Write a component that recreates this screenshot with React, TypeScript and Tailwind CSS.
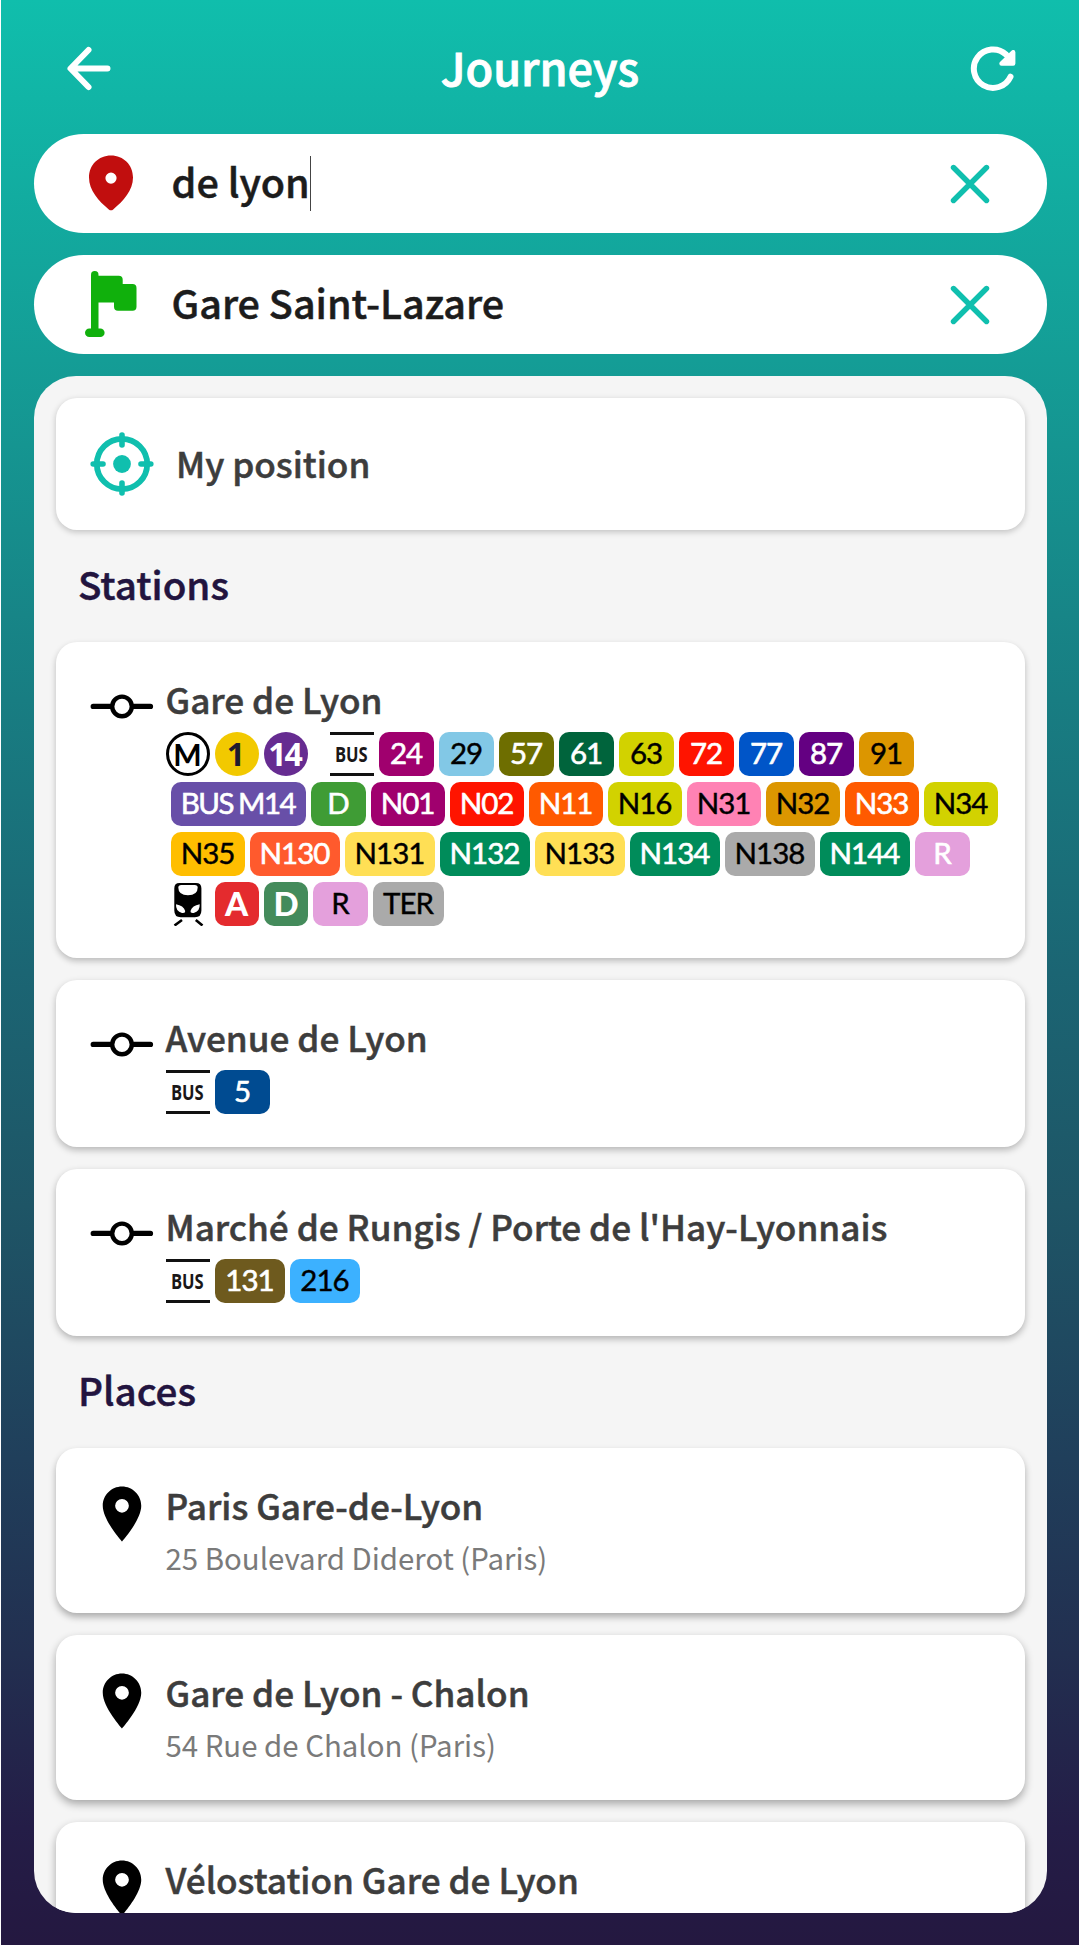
import React from "react";

type Badge = { label: string; bg: string; fg?: string; w?: string; spacing?: string };

const W2 = "w-[55px]";
const N2 = "w-[74px]";
const N3 = "w-[90px]";

const ROW_ONE: Badge[] = [
  { label: "24", bg: "bg-[#a0006e]" },
  { label: "29", bg: "bg-[#82c8e6]", fg: "text-black" },
  { label: "57", bg: "bg-[#6e6e00]" },
  { label: "61", bg: "bg-[#00643c]" },
  { label: "63", bg: "bg-[#d2d200]", fg: "text-black" },
  { label: "72", bg: "bg-[#ff1400]" },
  { label: "77", bg: "bg-[#0055c8]" },
  { label: "87", bg: "bg-[#640082]" },
  { label: "91", bg: "bg-[#dc9600]", fg: "text-black" },
];

const ROW_TWO: Badge[] = [
  { label: "BUS M14", bg: "bg-[#684fa8]", w: "w-[135px]", spacing: "tracking-[-1.5px] [word-spacing:-1px]" },
  { label: "D", bg: "bg-[#3f9c35]" },
  { label: "N01", bg: "bg-[#a0006e]", w: N2 },
  { label: "N02", bg: "bg-[#ff1400]", w: N2 },
  { label: "N11", bg: "bg-[#ff5a00]", w: N2 },
  { label: "N16", bg: "bg-[#d2d200]", fg: "text-black", w: N2 },
  { label: "N31", bg: "bg-[#ff82b4]", fg: "text-black", w: N2 },
  { label: "N32", bg: "bg-[#dc9600]", fg: "text-black", w: N2 },
  { label: "N33", bg: "bg-[#ff5a00]", w: N2 },
  { label: "N34", bg: "bg-[#d2d200]", fg: "text-black", w: N2 },
];

const ROW_THREE: Badge[] = [
  { label: "N35", bg: "bg-[#ffbe00]", fg: "text-black", w: N2 },
  { label: "N130", bg: "bg-[#ff5a2d]", w: N3 },
  { label: "N131", bg: "bg-[#ffdf55]", fg: "text-black", w: N3 },
  { label: "N132", bg: "bg-[#008c5a]", w: N3 },
  { label: "N133", bg: "bg-[#ffdf55]", fg: "text-black", w: N3 },
  { label: "N134", bg: "bg-[#008c5a]", w: N3 },
  { label: "N138", bg: "bg-[#aaaaaa]", fg: "text-black", w: N3 },
  { label: "N144", bg: "bg-[#008c5a]", w: N3 },
  { label: "R", bg: "bg-[#e4a0dc]" },
];

const ROW_FOUR: Badge[] = [
  { label: "R", bg: "bg-[#e4a0dc]", fg: "text-black" },
  { label: "TER", bg: "bg-[#aaaaaa]", fg: "text-black", w: "w-[71px]" },
];

const SANS = "font-['Noto_Sans_CJK_SC',sans-serif]";

const WHITE_TEXT = "text-white [-webkit-text-stroke:0.6px_white]";
const BLACK_TEXT = "text-black [-webkit-text-stroke:0.4px_black]";

function LineBadge({ label, bg, fg, w = W2, spacing = "tracking-[-1px]" }: Badge) {
  return (
    <span
      className={`flex h-[44px] shrink-0 items-center justify-center whitespace-nowrap rounded-[10px] pb-[2px] font-['Lato',sans-serif] text-[29.5px] leading-[42px] font-normal ${spacing} ${bg} ${fg ? BLACK_TEXT : WHITE_TEXT} ${w}`}
    >
      {label}
    </span>
  );
}

function BusMark() {
  return (
    <span className="flex h-[44px] w-[44px] shrink-0 items-center justify-center border-y-[3px] border-[#111] font-['Open_Sans',sans-serif] text-[21.5px] font-bold text-[#1a1718]">
      <span className="inline-block scale-x-[0.77]">BUS</span>
    </span>
  );
}

function TrainMark() {
  return (
    <svg className="h-[44px] w-[44px] shrink-0" viewBox="0 0 44 44">
      <path
        fill="#000"
        fillRule="evenodd"
        d="M13.500.9h16.500q5.400 0 5.400 5.400v22.200q0 6.800-6.500 6.800H14.800Q8.300 35.300 8.300 28.500V6.300q0-5.400 5.200-5.400zM15.300 2.900q-3 0-3 2.600 0 7.700 9.700 7.700t9.700-7.700q0-2.600-3-2.600zM10 22.300q-.4 7.200 6 8.700 3.600.5 3.200-1.900Q17.500 23.500 10 22.300zM33.700 22.300q.4 7.200-6 8.700-3.600.5-3.200-1.900 1.700-5.600 9.200-6.800z"
      />
      <path d="M16 38 8.500 43.500M29.800 38l6.700 5.500" stroke="#000" strokeWidth="2.600" />
    </svg>
  );
}

function CommitIcon() {
  return (
    <svg className="mt-[-2px] h-[66px] w-[66px] shrink-0" viewBox="0 0 66 66" fill="none" stroke="#000">
      <path d="M4.200 33.400H21M45 33.400h16.500" strokeWidth="5.200" strokeLinecap="round" />
      <circle cx="33" cy="33.400" r="9.800" strokeWidth="4.400" />
    </svg>
  );
}

function PinIcon() {
  return (
    <svg className="h-[66px] w-[66px] shrink-0" viewBox="0 0 24 24">
      <path d="M12 2C8.130 2 5 5.130 5 9c0 5.250 7 13 7 13s7-7.750 7-13c0-3.870-3.130-7-7-7zm0 9.500a2.500 2.500 0 0 1 0-5 2.500 2.500 0 0 1 0 5z" />
    </svg>
  );
}

function RedPin() {
  return (
    <svg className="mt-[-2px] h-[56px] w-[46px]" viewBox="0 0 46 56" fill="#c10e0e">
      <path
        fillRule="evenodd"
        d="M23 .6C10.500.6 1 10 1 22.600c0 12.600 9.600 23.600 19.800 31.800q2.200 1.700 4.400 0C35.400 46.200 45 35.200 45 22.600 45 10 35.500.6 23 .6zm0 28.100a5.600 5.600 0 1 1 0-11.200 5.600 5.600 0 0 1 0 11.200z"
      />
    </svg>
  );
}

function FlagIcon() {
  return (
    <svg className="h-[68px] w-[54px]" viewBox="0 0 54 68" fill="#10b00c">
      <rect x="7" y="0" width="7.500" height="64" rx="3.700" />
      <rect x="1" y="57.500" width="19.600" height="8.600" rx="4.300" />
      <path d="M12 4.800h22.700a4 4 0 0 1 4 4v4.300h9.800a4 4 0 0 1 4 4v18.600a4 4 0 0 1-4 4H34a4 4 0 0 1-4-4v-4.200H12z" />
    </svg>
  );
}

function ClearIcon() {
  return (
    <svg className="h-[40px] w-[40px]" viewBox="0 0 40 40" fill="none" stroke="#10bfae" strokeWidth="5.400" strokeLinecap="round">
      <path d="m3.500 3.500 33 33M36.500 3.500l-33 33" />
    </svg>
  );
}

function TargetIcon() {
  return (
    <svg className="h-[66px] w-[66px] shrink-0" viewBox="0 0 66 66" fill="none" stroke="#10bfae">
      <circle cx="33" cy="33" r="25.200" strokeWidth="5.800" />
      <circle cx="33" cy="33" r="8.900" fill="#10bfae" stroke="none" />
      <path d="M33 4v10M33 52v10M4.200 33h9.800M52 33h9.800" strokeWidth="5.600" strokeLinecap="round" />
    </svg>
  );
}

function Field({ icon, text, caret, mt }: { icon: React.ReactNode; text: string; caret?: boolean; mt: string }) {
  return (
    <div className={`flex h-[99px] items-center rounded-full bg-white ${mt}`}>
      <div className="flex w-[138px] shrink-0 justify-center pl-[16px]">{icon}</div>
      <div className={`flex flex-1 items-center ${SANS} text-[39.5px] leading-[56px] font-medium text-[#1c1c1c] [-webkit-text-stroke:0.5px_#1c1c1c]`}>
        <span className="pb-[5px]">{text}</span>
        {caret && <span className="h-[55px] w-px bg-[#444]" />}
      </div>
      <div className="mr-[57px]">
        <ClearIcon />
      </div>
    </div>
  );
}

function Card({ children, className }: { children: React.ReactNode; className: string }) {
  return <section className={`flex shrink-0 rounded-[21px] bg-white pl-[33px] ${className}`}>{children}</section>;
}

const TITLE = `${SANS} text-[35.150px] leading-[46px] font-medium text-[#3d3d3d] whitespace-nowrap [-webkit-text-stroke:0.5px_#3d3d3d]`;

function Station({ name, className, children }: { name: string; className: string; children: React.ReactNode }) {
  return (
    <Card className={`pt-[33px] ${className}`}>
      <CommitIcon />
      <div className="ml-[11px]">
        <h3 className={`${TITLE} pt-px`}>{name}</h3>
        <div className="mt-[10px] flex flex-col gap-[6px]">{children}</div>
      </div>
    </Card>
  );
}

function Place({ name, address, className }: { name: string; address: string; className: string }) {
  return (
    <Card className={`pt-[33px] ${className}`}>
      <PinIcon />
      <div className="ml-[11px]">
        <h3 className={`${TITLE} pt-px`}>{name}</h3>
        <p className={`${SANS} mt-[8px] text-[29.4px] leading-[42px] whitespace-nowrap text-[#7a7a7a]`}>{address}</p>
      </div>
    </Card>
  );
}

function Heading({ children }: { children: React.ReactNode }) {
  return (
    <h2 className={`flex h-[112px] shrink-0 items-center pl-[22.5px] pb-[5px] ${SANS} text-[38.6px] font-medium text-[#22143f] [-webkit-text-stroke:0.5px_#22143f]`}>
      {children}
    </h2>
  );
}

export default function App() {
  return (
    <div className="h-[1945px] w-[1080px] overflow-hidden bg-white px-px">
      <div className="flex h-full flex-col bg-[linear-gradient(180deg,#10beac_0%,#149d96_18.500%,#187d82_36%,#1b6573_50%,#1e5566_62%,#203f5b_75%,#222f50_85%,#241d47_94%,#241840_100%)] px-[32.5px]">
        <header className="flex h-[134px] shrink-0 items-center justify-between px-[29.5px]">
          <svg className="h-[50px] w-[50px]" viewBox="0 0 50 50" fill="none" stroke="#fff" strokeWidth="6" strokeLinecap="round" strokeLinejoin="round">
            <path d="M25.500 8 7.500 26.500l18 18.500M8 26.500h36.500" />
          </svg>
          <h1 className={`${SANS} pb-px text-[45px] leading-[60px] font-medium text-white [-webkit-text-stroke:0.9px_white]`}>Journeys</h1>
          <svg className="h-[50px] w-[50px]" viewBox="0 0 50 50" fill="none" stroke="#fff" strokeLinecap="round" strokeLinejoin="round">
            <path d="M43.500 34.700A19.200 19.200 0 1 1 39 12.500" strokeWidth="6" />
            <path d="M46.200 10.300v11.200H34.500L46 10.300" fill="#fff" strokeWidth="4.400" />
          </svg>
        </header>

        <Field mt="" icon={<RedPin />} text="de lyon" caret />
        <Field mt="mt-[22px]" icon={<FlagIcon />} text="Gare Saint-Lazare" />

        <main className="mt-[22px] flex h-[1537px] shrink-0 flex-col overflow-hidden rounded-[42px] bg-[#f5f5f5] px-[22px] pt-[22px]">
          <Card className="h-[132px] items-center shadow-[0_2px_6px_rgba(0,0,0,0.22)]">
            <TargetIcon />
            <span className={`${TITLE} ml-[21.5px] pb-[3px]`}>My position</span>
          </Card>

          <Heading>Stations</Heading>

          <Station name="Gare de Lyon" className="h-[316px] shadow-[0_3px_6px_rgba(0,0,0,0.24)]">
            <div className="flex gap-[5px]">
              <span className="flex h-[44px] w-[44px] items-center justify-center rounded-full border-[3px] border-black font-['Lato',sans-serif] text-[30px] font-bold text-black">
                M
              </span>
              <span className="flex h-[44px] w-[44px] items-center justify-center rounded-full bg-[#f2c900] pr-px font-['Open_Sans',sans-serif] text-[32px] font-bold text-[#1f1a2e]">
                1
              </span>
              <span className="mr-[17px] flex h-[44px] w-[44px] items-center justify-center rounded-full bg-[#662c91] pr-[2px] font-['Open_Sans',sans-serif] text-[32px] font-bold tracking-[-2px] text-white">
                14
              </span>
              <BusMark />
              {ROW_ONE.map((b) => (
                <LineBadge key={b.label} {...b} />
              ))}
            </div>
            <div className="ml-[5px] flex gap-[5px]">
              {ROW_TWO.map((b) => (
                <LineBadge key={b.label} {...b} />
              ))}
            </div>
            <div className="ml-[5px] flex gap-[5px]">
              {ROW_THREE.map((b) => (
                <LineBadge key={b.label} {...b} />
              ))}
            </div>
            <div className="flex gap-[5px]">
              <TrainMark />
              <span className="flex h-[44px] w-[44px] items-center justify-center rounded-[10px] bg-[#e42b2e] font-['Lato',sans-serif] text-[33px] font-black text-white">
                A
              </span>
              <span className="flex h-[44px] w-[44px] items-center justify-center rounded-[10px] bg-[#448b5b] pl-px font-['Lato',sans-serif] text-[33px] font-black text-white">
                D
              </span>
              {ROW_FOUR.map((b) => (
                <LineBadge key={b.label} {...b} />
              ))}
            </div>
          </Station>

          <Station name="Avenue de Lyon" className="mt-[22px] h-[167px] shadow-[0_3px_7px_rgba(0,0,0,0.26)]">
            <div className="flex gap-[5px]">
              <BusMark />
              <LineBadge label="5" bg="bg-[#004b91]" />
            </div>
          </Station>

          <Station name="Marché de Rungis / Porte de l'Hay-Lyonnais" className="mt-[22px] h-[167px] shadow-[0_3px_7px_rgba(0,0,0,0.28)]">
            <div className="flex gap-[5px]">
              <BusMark />
              <LineBadge label="131" bg="bg-[#6e5a1e]" w="w-[70px]" />
              <LineBadge label="216" bg="bg-[#3cb1ff]" fg="text-black" w="w-[70px]" />
            </div>
          </Station>

          <Heading>Places</Heading>

          <Place name="Paris Gare-de-Lyon" address="25 Boulevard Diderot (Paris)" className="h-[165px] shadow-[0_4px_7px_rgba(0,0,0,0.3)]" />
          <Place name="Gare de Lyon - Chalon" address="54 Rue de Chalon (Paris)" className="mt-[22px] h-[165px] shadow-[0_4px_8px_rgba(0,0,0,0.32)]" />
          <Place name="Vélostation Gare de Lyon" address="" className="mt-[22px] h-[165px] shadow-[0_4px_8px_rgba(0,0,0,0.32)]" />
        </main>
      </div>
    </div>
  );
}
